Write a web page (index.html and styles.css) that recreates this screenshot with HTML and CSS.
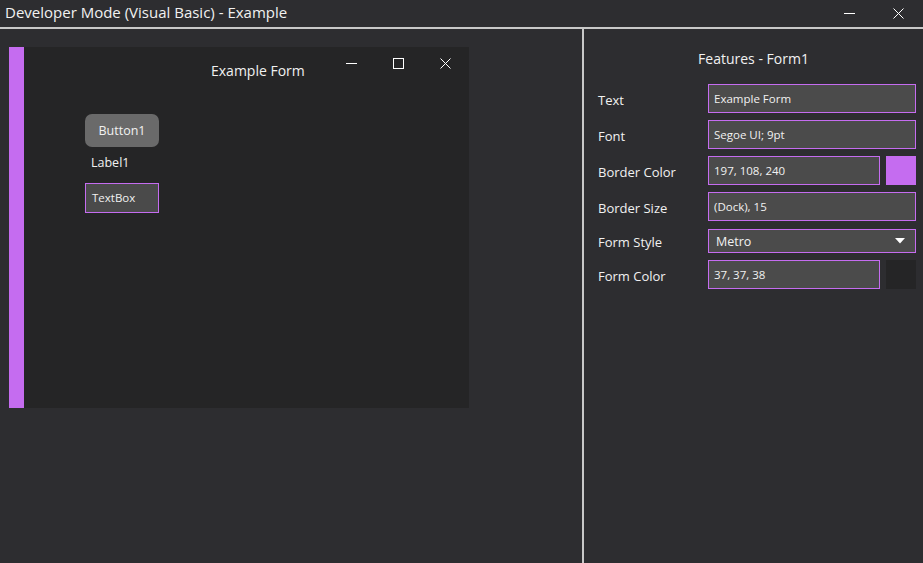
FILE: index.html
```html
<!DOCTYPE html>
<html lang="en">
<head>
    <meta charset="UTF-8">
    <meta name="viewport" content="width=device-width, initial-scale=1.0">
    <title>Developer Mode (Visual Basic) - Example</title>
    <link rel="stylesheet" href="styles.css">
</head>
<body>
    <div class="titlebar">
        <span class="app-title">Developer Mode (Visual Basic) - Example</span>
        <div class="win-buttons">
            <button class="cap-btn" title="Minimize">
                <svg width="11" height="11" viewBox="0 0 11 11"><path d="M0 5.5H11" stroke="#fff" stroke-width="1"/></svg>
            </button>
            <button class="cap-btn" title="Close">
                <svg width="11" height="11" viewBox="0 0 11 11"><path d="M0.5 0.5L10.5 10.5M10.5 0.5L0.5 10.5" stroke="#fff" stroke-width="1"/></svg>
            </button>
        </div>
    </div>
    <div class="main">
        <div class="designer">
            <div class="form">
                <div class="form-head">
                    <span class="form-title">Example Form</span>
                    <div class="form-caps">
                        <span class="form-cap">
                            <svg width="11" height="11" viewBox="0 0 11 11"><path d="M0 5.5H11" stroke="#fff" stroke-width="1"/></svg>
                        </span>
                        <span class="form-cap">
                            <svg width="11" height="11" viewBox="0 0 11 11"><rect x="0.5" y="0.5" width="10" height="10" fill="none" stroke="#fff" stroke-width="1"/></svg>
                        </span>
                        <span class="form-cap">
                            <svg width="11" height="11" viewBox="0 0 11 11"><path d="M0.5 0.5L10.5 10.5M10.5 0.5L0.5 10.5" stroke="#fff" stroke-width="1"/></svg>
                        </span>
                    </div>
                </div>
                <div class="controls">
                    <button class="ctl-button">Button1</button>
                    <span class="ctl-label">Label1</span>
                    <div class="ctl-textbox">TextBox</div>
                </div>
            </div>
        </div>
        <div class="features">
            <h3>Features - Form1</h3>
            <div class="props">
                <label>Text</label>
                <input class="field" type="text" value="Example Form">

                <label>Font</label>
                <input class="field" type="text" value="Segoe UI; 9pt">

                <label>Border Color</label>
                <div class="with-swatch">
                    <input class="field" type="text" value="197, 108, 240">
                    <span class="swatch purple"></span>
                </div>

                <label>Border Size</label>
                <input class="field" type="text" value="(Dock), 15">

                <label>Form Style</label>
                <div class="select">
                    <span>Metro</span>
                    <svg width="10" height="6" viewBox="0 0 10 6"><path d="M0 0H10L5 5.5Z" fill="#fff"/></svg>
                </div>

                <label>Form Color</label>
                <div class="with-swatch">
                    <input class="field" type="text" value="37, 37, 38">
                    <span class="swatch dark"></span>
                </div>
            </div>
        </div>
    </div>
</body>
</html>
```

FILE: styles.css
```css
:root {
    --bg: #2d2d30;
    --form-bg: #252526;
    --field-bg: #4b4b4b;
    --accent: #c56cf0;
    --text: #f1f1f1;
    --line: #c8c8c8;
}
* { box-sizing: border-box; }
body {
    font-family: 'Open Sans', sans-serif;
    margin: 0;
    width: 923px;
    height: 563px;
    background: var(--bg);
    color: var(--text);
    display: flex;
    flex-direction: column;
    overflow: hidden;
}
.titlebar {
    height: 29px;
    border-bottom: 2px solid var(--line);
    display: flex;
    align-items: center;
    padding-left: 5px;
}
.app-title { font-size: 15px; margin-top: -4px; }
.win-buttons { margin-left: auto; display: flex; align-self: flex-start; }
.cap-btn {
    width: 49px;
    height: 27px;
    background: none;
    border: none;
    padding: 0;
    display: flex;
    justify-content: center;
    align-items: flex-start;
    padding-top: 8px;
}
.main { flex: 1; display: flex; }
.designer {
    width: 584px;
    border-right: 2px solid var(--line);
    padding: 18px 0 0 9px;
}
.form {
    width: 460px;
    height: 361px;
    background: var(--form-bg);
    border-left: 15px solid var(--accent);
}
.form-head { display: flex; height: 48px; }
.form-title { font-size: 14px; margin: 14px 0 0 187px; }
.form-caps { margin-left: auto; display: flex; }
.form-cap {
    width: 47px;
    display: flex;
    justify-content: center;
    padding-top: 11px;
}
.controls {
    display: flex;
    flex-direction: column;
    align-items: flex-start;
    padding: 19px 0 0 61px;
}
.ctl-button {
    width: 74px;
    height: 33px;
    background: #6a6a6a;
    border: none;
    border-radius: 7px;
    color: var(--text);
    font-family: inherit;
    font-size: 12.5px;
    padding-top: 1px;
}
.ctl-label { font-size: 12.5px; margin: 6px 0 0 6px; height: 30px; line-height: 20px; }
.ctl-textbox {
    width: 74px;
    height: 30px;
    border: 1px solid var(--accent);
    background: #4a4a4a;
    font-size: 11.5px;
    line-height: 27px;
    padding-left: 6px;
}
.features { flex: 1; padding: 0 7px 0 14px; }
.features h3 {
    font-weight: normal;
    font-size: 14px;
    text-align: center;
    margin: 20px 0 16px 0;
    padding-right: 7px;
}
.props {
    display: grid;
    grid-template-columns: 110px 1fr;
    row-gap: 7px;
    align-items: center;
}
.props label { font-size: 13px; padding-top: 2px; }
.field {
    width: 100%;
    height: 29px;
    background: var(--field-bg);
    border: 1px solid var(--accent);
    color: var(--text);
    font-family: inherit;
    font-size: 11.5px;
    padding: 0 5px;
    outline: none;
}
.with-swatch { display: flex; gap: 6px; }
.with-swatch .field { flex: 1; width: auto; }
.swatch { width: 30px; height: 29px; }
.swatch.purple { background: var(--accent); }
.swatch.dark { background: var(--form-bg); }
.select {
    height: 24px;
    margin-top: 1px;
    background: var(--field-bg);
    border: 1px solid var(--accent);
    display: flex;
    align-items: center;
    justify-content: space-between;
    padding: 0 10px 0 7px;
    font-size: 12.5px;
}
```
